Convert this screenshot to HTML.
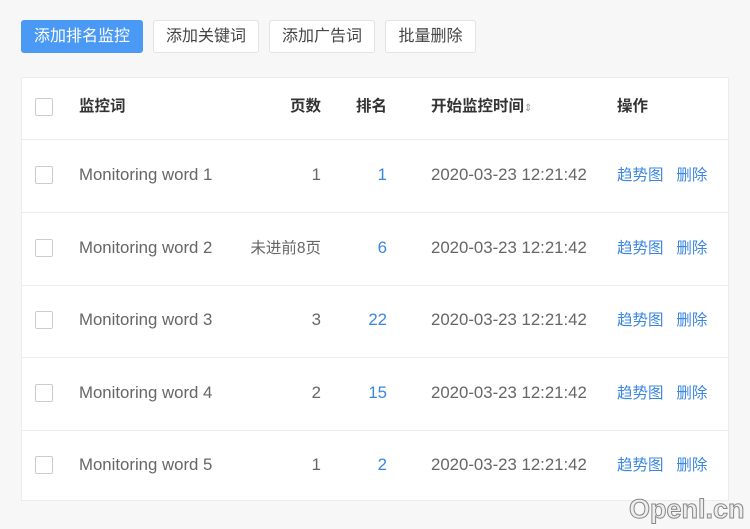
<html><head><style>
body{margin:0;width:750px;height:529px;background:#f7f7f7;font-family:"Liberation Sans","Noto Sans CJK SC",sans-serif;position:relative;overflow:hidden}
.btn{position:absolute;top:20px;height:33px;box-sizing:border-box;border:1px solid #e3e3e3;background:#fff;border-radius:3px;font-size:16px;color:#444;line-height:31px;text-align:center}
.tbl{position:absolute;left:21px;top:77px;width:708px;height:424px;background:#fff;border:1px solid #ececec;box-sizing:border-box}
.row{position:absolute;left:0;width:706px;border-bottom:1px solid #ececec;font-size:16.8px;color:#666}
.row span{position:absolute;line-height:20px;top:25px;white-space:nowrap}
.row span.c{font-size:15.5px;top:26px}
.cb{position:absolute;left:13px;width:18px;height:18px;box-sizing:border-box;border:1px solid #ccc;border-radius:2px;background:#fff;top:26px}
.h span{top:19px;color:#333;font-weight:bold;font-size:15.5px}
.blue{color:#3b86e0}
</style></head><body>
<div class="btn" style="left:21px;width:122px;background:#4a9af5;border-color:#4a9af5;color:#fff">添加排名监控</div>
<div class="btn" style="left:153px;width:106px">添加关键词</div>
<div class="btn" style="left:269px;width:106px">添加广告词</div>
<div class="btn" style="left:385px;width:91px">批量删除</div>
<div class="tbl">
<div class="row h" style="top:0;height:61px">
<div class="cb" style="top:20px"></div>
<span style="left:57px">监控词</span>
<span style="right:407px">页数</span>
<span style="right:341px">排名</span>
<span style="left:409px">开始监控时间<span style="position:static;font-size:10px;color:#999;font-weight:normal">⇕</span></span>
<span style="left:595px">操作</span>
</div>
<div class="row" style="top:62px;height:72px"><div class="cb"></div><span style="left:57px">Monitoring word 1</span><span style="right:407px">1</span><span class="blue" style="right:341px">1</span><span style="left:409px">2020-03-23 12:21:42</span><span class="blue c" style="left:595px">趋势图&nbsp;&nbsp;&nbsp;删除</span></div>
<div class="row" style="top:135px;height:72px"><div class="cb"></div><span style="left:57px">Monitoring word 2</span><span class="c" style="right:407px">未进前8页</span><span class="blue" style="right:341px">6</span><span style="left:409px">2020-03-23 12:21:42</span><span class="blue c" style="left:595px">趋势图&nbsp;&nbsp;&nbsp;删除</span></div>
<div class="row" style="top:207px;height:72px"><div class="cb"></div><span style="left:57px">Monitoring word 3</span><span style="right:407px">3</span><span class="blue" style="right:341px">22</span><span style="left:409px">2020-03-23 12:21:42</span><span class="blue c" style="left:595px">趋势图&nbsp;&nbsp;&nbsp;删除</span></div>
<div class="row" style="top:280px;height:72px"><div class="cb"></div><span style="left:57px">Monitoring word 4</span><span style="right:407px">2</span><span class="blue" style="right:341px">15</span><span style="left:409px">2020-03-23 12:21:42</span><span class="blue c" style="left:595px">趋势图&nbsp;&nbsp;&nbsp;删除</span></div>
<div class="row" style="top:352px;height:70px;border:none"><div class="cb"></div><span style="left:57px">Monitoring word 5</span><span style="right:407px">1</span><span class="blue" style="right:341px">2</span><span style="left:409px">2020-03-23 12:21:42</span><span class="blue c" style="left:595px">趋势图&nbsp;&nbsp;&nbsp;删除</span></div>
</div>
<div style="position:absolute;left:629px;top:494px;font-size:27px;color:#eee;-webkit-text-stroke:1px #888;font-weight:bold">Openl.cn</div>
</body></html>
